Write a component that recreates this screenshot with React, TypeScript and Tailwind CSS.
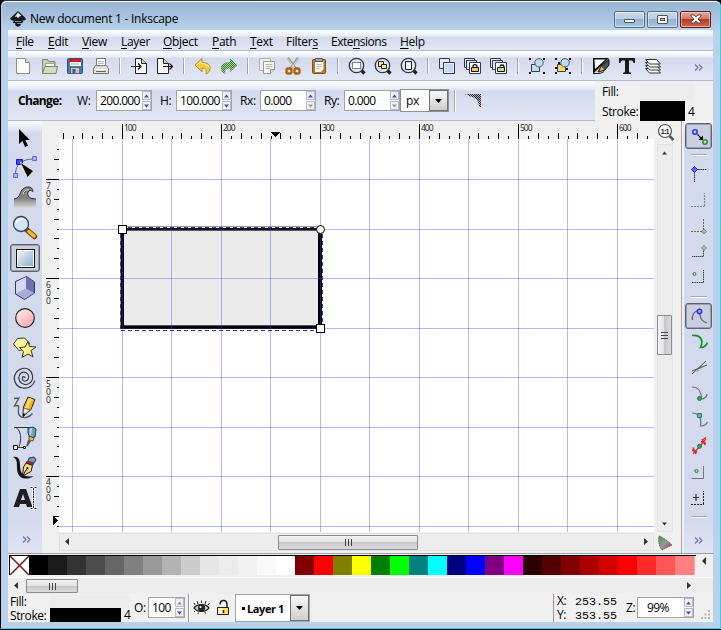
import React from "react";

type Kids = { children?: React.ReactNode };

const BAR = "bg-[linear-gradient(to_bottom,#fff_0px,#e8ecf7_6px,#d4daed_7px,#e2e7f5_100%)]";

/** 24px drawing used in every tool bar */
const Ic = ({ children }: Kids) => (
  <svg width="24" height="24" viewBox="0 0 24 24" className="block shrink-0" fill="none">
    {children}
  </svg>
);
const Slot = ({ children }: Kids) => (
  <div className="flex h-[26px] w-[26px] shrink-0 items-center justify-center">{children}</div>
);
const VSep = () => (
  <div className="flex w-3 shrink-0 justify-center">
    <div className="h-4 w-[2px] border-l border-[#a5a5a8] bg-white" />
  </div>
);
const HSep = () => (
  <div className="flex h-3 shrink-0 items-center justify-center">
    <div className="h-[2px] w-4 border-t border-[#a5a5a8] bg-white" />
  </div>
);
const Chevrons = () => (
  <svg width="9" height="7" viewBox="0 0 9 7" fill="none" stroke="#6e77b5" strokeWidth="1.2">
    <path d="M1 .5 4 3.500 1 6.500M5 .5 8 3.500 5 6.500" />
  </svg>
);

/* ---------- command bar drawings ---------- */
const IcNew = () => (
  <Ic>
    <path d="M5.500 4.500h9l4 4v11h-13z" fill="#fbfbf8" stroke="#8d8e8a" />
    <path d="M14.500 4.500v4h4" fill="#ddd" stroke="#8d8e8a" />
  </Ic>
);
const IcOpen = () => (
  <Ic>
    <path d="M5.500 19V5.500h5l1 2h6.500V19z" fill="#c9cfb2" stroke="#7d876b" />
    <path d="M8.500 9.500h9v4h-9z" fill="#f8f8f5" stroke="#9ba38c" />
    <path d="M5.500 19.500 8 12.500h12.500l-1.500 7z" fill="#d3dabd" stroke="#7d876b" />
  </Ic>
);
const IcSave = () => (
  <Ic>
    <rect x="4.500" y="4.500" width="15" height="15" rx="1" fill="#467ab5" stroke="#25508a" />
    <path d="M7 5h11v7H7z" fill="#fff" />
    <path d="M6 5h12v3H6z" fill="#e0151c" />
    <path d="M8 10h8" stroke="#aaa" />
    <path d="M7.500 13.500h9v6h-9z" fill="#c8c8c4" stroke="#656a70" />
    <path d="M9.500 15h3v4h-3z" fill="#345f91" />
  </Ic>
);
const IcPrint = () => (
  <Ic>
    <path d="M7.500 12V4.500h9V12" fill="#fff" stroke="#777" />
    <path d="M9 7.500h6M9 9.500h6" stroke="#bbb" />
    <path d="M6.500 11.500h11l2 3v5h-15v-5z" fill="#dededb" stroke="#777" />
    <path d="M5 15.500h14" stroke="#fff" />
    <path d="M7 17.500h10" stroke="#666" />
  </Ic>
);
const IcImport = () => (
  <Ic>
    <path d="M8.500 4.500h6l5 5v10h-11z" fill="#f6f6f4" stroke="#222" />
    <path d="M14.500 4.500v5h5" fill="#ccc" stroke="#222" />
    <path d="M4 12.500h9M11 9.500l3 3-3 3" stroke="#111" strokeWidth="1.200" />
  </Ic>
);
const IcExport = () => (
  <Ic>
    <path d="M4.500 4.500h6l5 5v10h-11z" fill="#f6f6f4" stroke="#222" />
    <path d="M10.500 4.500v5h5" fill="#ccc" stroke="#222" />
    <path d="M10 12.500h9M16.500 9.500l3 3-3 3" stroke="#111" strokeWidth="1.200" />
  </Ic>
);
const IcUndo = () => (
  <Ic>
    <path d="M4 11 11 4.500v4c6 0 9 3 8 7-.5 2-2 3.500-4 4.500 1-4-.5-6-4-6v4z" fill="#f0cd3c" stroke="#b8911b" />
    <path d="M6 11 10 7.500v2c4 0 7 1.500 8 4" stroke="#fdf0a0" />
  </Ic>
);
const IcRedo = () => (
  <Ic>
    <defs>
      <pattern id="redo" width="2" height="2" patternUnits="userSpaceOnUse">
        <path d="M0 0h1v1H0zM1 1h1v1H1z" fill="#3d8030" />
        <path d="M1 0h1v1H1zM0 1h1v1H0z" fill="#a9cc98" />
      </pattern>
    </defs>
    <path d="M20.500 11 13 4v4c-6 0-10 3-9 7.500 .5 2 2 3.500 4.500 4.500-1-4 .5-5.500 4.500-5.500V18z" fill="url(#redo)" />
  </Ic>
);
const IcCopy = () => (
  <Ic>
    <path d="M4.500 4.500h11v12h-11z" fill="#efefef" stroke="#b0b0b0" />
    <path d="M8.500 7.500h11v8l-4 4h-7z" fill="#f7f7f7" stroke="#999" />
    <path d="M10.500 10.500h7M10.500 12.500h7M10.500 14.500h5" stroke="#b5b5b5" />
    <path d="M15.500 19.500v-4h4" fill="#ddd" stroke="#999" />
  </Ic>
);
const IcCut = () => (
  <Ic>
    <path d="m7 4 8 11M17 4 9 15" stroke="#8e8e8c" strokeWidth="2.200" />
    <path d="m7 4.500 7 10M17 4.500l-7 10" stroke="#eee" strokeWidth=".8" />
    <rect x="5.500" y="14.500" width="5" height="5" rx="1.500" stroke="#a5640a" strokeWidth="2.300" />
    <rect x="13.500" y="14.500" width="5" height="5" rx="1.500" stroke="#a5640a" strokeWidth="2.300" />
  </Ic>
);
const IcPaste = () => (
  <Ic>
    <rect x="5.500" y="5.500" width="13" height="14" rx="1" fill="#b87a25" stroke="#7d4e10" />
    <path d="M8 7h8.500v8l-2.500 3H8z" fill="#f5f5f3" />
    <path d="M8.500 4.500h7v3h-7z" fill="#aaa" stroke="#555" />
    <path d="M9.500 10.500h5M9.500 12.500h5M9.500 14.500h3" stroke="#b8b8b8" />
  </Ic>
);
const Lens = ({ children }: Kids) => (
  <Ic>
    <path d="m15.500 15.500 4 4" stroke="#222" strokeWidth="3.200" />
    <circle cx="11.500" cy="11.500" r="7.200" fill="#d9e6f3" stroke="#31363b" strokeWidth="1.300" />
    {children}
  </Ic>
);
const IcZoomSel = () => <Lens><path d="M7.500 8.500h8v6h-8z" fill="#fff" stroke="#111" strokeDasharray="1 1" /></Lens>;
const IcZoomDraw = () => (
  <Lens>
    <path d="M7.500 7.500h5v5h-5z" fill="#ffe27c" stroke="#222" />
    <path d="M10.500 10.500h5v4h-5z" fill="#ffe9a3" stroke="#222" />
  </Lens>
);
const IcZoomPage = () => <Lens><path d="M8.500 7.500h6v8h-6z" fill="#f5f5f5" stroke="#222" /></Lens>;
const IcDup = () => (
  <Ic>
    <path d="M4.500 4.500h10v10h-10z" fill="#dfe8f3" stroke="#303b4a" />
    <path d="M8.500 8.500h11v11h-11z" fill="#c6d9ee" stroke="#303b4a" />
    <path d="M9.500 9.500h9v9h-9z" stroke="#e8f1fa" />
  </Ic>
);
const IcClone = ({ cut }: { cut?: boolean }) => (
  <Ic>
    <path d="M3.500 4.500h10v9h-10z" fill="#dfe8f3" stroke="#303b4a" />
    <path d="M5.500 6.500h10v9h-10z" fill="#dfe8f3" stroke="#303b4a" />
    <path d="M8.500 8.500h11v11h-11z" fill="#f3f6fa" stroke="#303b4a" />
    <path d={cut ? "M13 12.500c0-2 4-2 4 0V14" : "M12 14v-1.500c0-2.500 4-2.500 4 0V14"} stroke="#111" strokeWidth="1.300" />
    <path d="M10.500 13.500h7v4h-7z" fill={cut ? "#b9df91" : "#ffc94b"} stroke="#111" />
  </Ic>
);
const IcGroup = ({ un }: { un?: boolean }) => (
  <Ic>
    <path d="M4 4h2v2H4zM18 4h2v2h-2zM4 18h2v2H4zM18 18h2v2h-2z" fill="#111" />
    {un && <path d="M7 8h2v2H7zM15 14h2v2h-2zM4 13h2v2H4z" fill="#111" />}
    <path d="M6.500 10.500h8v7h-8z" fill={un ? "#ffd65c" : "#c8dbf0"} stroke="#333f4c" />
    <circle cx="14" cy="8.800" r="4.200" fill="#c5d9ee" stroke="#48596b" />
  </Ic>
);
const IcFill = () => (
  <Ic>
    <path d="M4 4h16L5 19H4z" fill="#111" />
    <path d="M5.500 5.500h11L6 15z" fill="#f7f7f7" />
    <path d="m20 5.500-7 5.500-4 7 7-2 4-5z" fill="#4b5259" stroke="#111" />
    <path d="m12 12 4 3.500-6 2.500z" fill="#f1b63c" stroke="#111" strokeWidth=".6" />
    <path d="M4 19.500c4 0 8 .5 11-2" stroke="#111" />
  </Ic>
);
const IcText = () => (
  <Ic>
    <path d="M4 4h16v5h-1.500c-.3-2-1-2.500-3-2.500h-1.500v10.500c0 1 .5 1.500 2 1.700V20H8v-1.300c1.500-.2 2-.7 2-1.700V6.500H8.500c-2 0-2.700.5-3 2.500H4z" fill="#1b1b1b" />
  </Ic>
);
const IcLayers = () => (
  <Ic>
    {[14.5, 11.5, 8.5, 5.5].map((y) => (
      <path key={y} d={`M4.500 ${y}h11l4 4.500h-11z`} fill="#fff" stroke="#333" />
    ))}
  </Ic>
);

/* ---------- tool box drawings ---------- */
const TBox = ({ children }: Kids) => (
  <svg width="26" height="26" viewBox="0 0 26 26" className="block" fill="none">
    {children}
  </svg>
);
const tools = [
  <path d="M7 4v15l3.500-3 2.500 6 3-1.200-2.600-5.800H18z" fill="#000" />,
  <>
    <path d="M3.500 19C3.500 10 9 4 22 4" stroke="#666" />
    <path d="M1.500 18.500h4v4h-4zM20.500 1.500h4v4h-4z" fill="#aab0ff" stroke="#6267ea" />
    <path d="M4.500 4.500h6v5h-6z" fill="#4046e6" stroke="#1414c8" />
    <path d="m8 7 13.500 9-6 6.500z" fill="#000" stroke="#fff" strokeWidth=".7" />
  </>,
  <>
    <defs>
      <linearGradient id="wave" x2="0" y2="1"><stop stopColor="#8a8a8a" /><stop offset=".5" stopColor="#808080" /><stop offset="1" stopColor="#e0e0e0" /></linearGradient>
    </defs>
    <path d="M2 24V14c3-.5 5-2 6-5C9.500 4.500 12 2 16 2c3 0 5 1.500 5 4.500-1.500-1.500-4.500-1.500-5 .5-1 3 1 6 4 6.500l4 .5v10z" fill="url(#wave)" />
    <path d="M2 14c3-.5 5-2 6-5C9.500 4.500 12 2 16 2c3 0 5 1.500 5 4.500-1.500-1.500-4.500-1.500-5 .5-1 3 1 6 4 6.500l4 .5M12 8c1-2.500 3-4 5.500-4" stroke="#333" />
    <path d="M11 9c1-3 3-4.500 6-4.500" stroke="#ddd" />
  </>,
  <>
    <path d="m15 15 7.500 6.500" stroke="#6d4a10" strokeWidth="5.500" strokeLinecap="round" />
    <path d="m17 16.500 5 4.500" stroke="#f7b52d" strokeWidth="3.500" strokeLinecap="round" />
    <circle cx="9" cy="9" r="7.500" fill="#d5e7f6" stroke="#354554" strokeWidth="1.300" />
    <path d="M4 8c1-3 4-5 7-4" stroke="#fff" strokeWidth="1.500" />
  </>,
  <>
    <defs>
      <linearGradient id="sq" x2="1" y2="1"><stop stopColor="#edf5fb" /><stop offset="1" stopColor="#8eafcd" /></linearGradient>
    </defs>
    <rect x="4.500" y="4.500" width="18" height="18" fill="#fff" stroke="#111" />
    <path d="M6 6h15v15H6z" fill="url(#sq)" />
  </>,
  <>
    <path d="m3.500 6.500 11-5 8 5.500v11l-10 6.500-9-5.500z" fill="#8186bb" stroke="#33365c" />
    <path d="m4 7 10-5v12l-10 5z" fill="#d5d7ee" />
    <path d="m14 2 8 5v11l-8-4.500z" fill="#6c71b0" />
    <path d="m4 18.500 10-5 8 4.500-9.500 6z" fill="#a9acd5" />
  </>,
  <>
    <defs>
      <linearGradient id="ball" x2="1" y2="1"><stop stopColor="#fff1f2" /><stop offset="1" stopColor="#ff9ea6" /></linearGradient>
    </defs>
    <circle cx="13" cy="13" r="9.300" fill="url(#ball)" stroke="#222" strokeWidth="1.200" />
  </>,
  <>
    <path d="m1.500 9 4-5.500 7-.5 5 5-2.500 6-8 1.500z" fill="#fff5a6" stroke="#3b3720" />
    <path d="m16 6.500 1.500 5 6.500.5-5 3.500 2 6.500-5-3-6 3.500 1.500-6-4-4 5.500-.5z" fill="#fff08a" stroke="#3b3720" />
  </>,
  <path d="M13 13c0-1.500-2-2-2.500-.5-1 2.500 1 4 3 3.500 3-.7 4-4 2.500-6.500C14 6 9 6.500 7.500 10c-2 4 .5 9 5.500 9.500 5.500.5 8.500-4.500 7.500-9C19.500 5 15 2.500 10.500 3.500 4.500 5 1 10.500 2.700 16c1 3.500 4 6.500 8 7 6 1 11-2.500 12-7.500" stroke="#353b47" strokeWidth="1.200" />,
  <>
    <path d="M2 3.500 7 3 2.500 11l3-.5c3 0-1 6.500 2 10 3 4 10 2 13-2" stroke="#55575c" strokeWidth="1.300" />
    <path d="m16 2 7 2.500-4 10-8 7 .5-9.500z" fill="#f3ac25" stroke="#2d2415" />
    <path d="m17 3 3 1-4 9-3 1z" fill="#ffdf62" />
    <path d="m11.500 13 6.500 2-7 6.500z" fill="#f2e4c8" stroke="#222" strokeWidth=".6" />
    <path d="m11 18 2.500 1-2.500 3z" fill="#111" />
  </>,
  <>
    <path d="M2 2.500h15M4 2.500c5 3 6 12 3 19M5 22.500h8" stroke="#333" />
    <path d="M1.500 20.500h4v4h-4zM11.500 21.500h2v2h-2z" fill="#fff" stroke="#111" />
    <path d="m16 3 5-1 3 2-1 8-5 1-2-5z" fill="#6d9fbf" stroke="#26343d" />
    <path d="m18 3.500 2-.5-1 8-1.500-1z" fill="#b8dced" />
    <path d="m17 11 5 2-1 3-4-1z" fill="#f2bd3b" stroke="#222" strokeWidth=".7" />
    <path d="m16 15 3 1-3 5-2 1z" fill="#555" />
  </>,
  <>
    <path d="M1 2c5-1 7 2 7 8 0 7 2 13 14 11-8 5-17 3-17-8C5 7 5 4 1 2z" fill="#151515" />
    <path d="m17 3 5-1 2 3-3 4-5-2z" fill="#6d9fbf" stroke="#26343d" />
    <path d="m15 6 7 2-1 2-7-2z" fill="#c61e24" stroke="#330b0d" strokeWidth=".5" />
    <path d="m14 8 6.500 2.500-1.500 6-8.500 4.500 1-9z" fill="#f8d67a" stroke="#1e1a12" />
    <path d="m11 20 4.500-7" stroke="#111" />
    <circle cx="15.500" cy="13" r="1" fill="#111" />
  </>,
  <>
    <path d="M1.500 22 8 4h6l6.500 18h-5.500l-1-3H8l-1 3zM9 15h4l-2-6z" fill="#1e1e1e" fillRule="evenodd" />
    <path d="M21.500 3.500v19M18.500 2.500h2l1 1 1-1h2M18.500 23.500h2l1-1 1 1h2" stroke="#fff" strokeWidth="2.500" />
    <path d="M21.500 3.500v19M18.500 2.500h2l1 1 1-1h2M18.500 23.500h2l1-1 1 1h2" stroke="#222" strokeDasharray="2 .5" />
  </>,
];

/* ---------- snap bar drawings ---------- */
const diamond = (x: number, y: number, f = "#9fc79f", s = "#3f6f46") => (
  <path d={`M${x} ${y - 2.5}l2.500 2.500-2.500 2.500-2.500-2.500z`} fill={f} stroke={s} strokeDasharray="1 .4" />
);
const SnapMain = () => (
  <Ic>
    <circle cx="8" cy="8" r="2.200" fill="#c5c9ff" stroke="#2f35ea" strokeWidth="1.600" />
    <circle cx="18" cy="18" r="2.200" fill="#bfe5c5" stroke="#2f8a3c" strokeWidth="1.600" />
    <path d="m10.500 10.500 4 4" stroke="#000" strokeWidth="1.300" strokeDasharray="2 .5" />
    <path d="M16 11.500V16h-4.500z" fill="#000" />
  </Ic>
);
const snapsA = [
  <>
    <path d="M7.500 8v12M9 7.500h11" stroke="#222" strokeDasharray="1.500 .7" />
    <path d="M7.500 4.500l3 3-3 3-3-3z" fill="#5d63f3" stroke="#2228dc" />
  </>,
  <path d="M4 18.500h13.500M17.500 18V5" stroke="#6f8f74" strokeWidth="1.200" strokeDasharray="2 1" />,
  <>
    <path d="M4 17.500h12M16.500 16V4" stroke="#666" strokeDasharray="2 1" />
    {diamond(17, 17.5)}
  </>,
  <>
    <path d="M5 16.500h11.500v-9" stroke="#444" strokeDasharray="1.500 .5" />
    {diamond(17, 8)}
  </>,
  <>
    <path d="M5 16.500h11.500V4" stroke="#333" strokeDasharray="1.500 .8" />
    <circle cx="7.500" cy="8" r="1.500" fill="#b5d5b8" stroke="#55805a" />
  </>,
];
const SnapPath = () => (
  <Ic>
    <path d="M5.500 16c-1-4 2-10 6-8.500 3 1-1 9 8.500 11.500" stroke="#555c66" strokeWidth="1.200" />
    <circle cx="12.500" cy="7.500" r="2.200" fill="#a9aeff" stroke="#2f35ea" strokeWidth="1.500" />
  </Ic>
);
const snapsB = [
  <path d="M5 5.500c8-1 12 4 8.500 12 3 0 6-2 7-5" stroke="#16902a" strokeWidth="1.700" />,
  <>
    <path d="M5 18 19 5M5 15l15-6" stroke="#555" />
    <path d="m8 14.500 7-5M10 15.500l6-6" stroke="#47764b" strokeDasharray="2 1" />
  </>,
  <>
    <path d="M5 5c6 0 9 3 9.500 12M14 17c4 0 6-3 6-5" stroke="#666e79" strokeWidth="1.200" />
    <circle cx="12.500" cy="16.500" r="2" fill="#4fa75b" stroke="#257b35" />
  </>,
  <>
    <path d="M5 5c6 0 10 4 8.500 13 3 0 6-2 7-4" stroke="#666e79" strokeWidth="1.200" />
    <path d="M10.500 5.500h4v4h-4z" fill="#7ea9a2" stroke="#257b5a" />
  </>,
  <>
    <path d="m6 20 13-15" stroke="#c13b3b" strokeWidth="1.200" />
    <path d="m5 16 5 2M6 13.500l3 6.500M14 7.500l5 2M15 5l3 6M16 5.500l3-2" stroke="#dc2525" strokeWidth="1.500" />
    <circle cx="12.500" cy="12.300" r="2" fill="#46a354" stroke="#207833" />
  </>,
  <>
    <path d="M4.500 18.500h12V6" stroke="#777" />
    <circle cx="9.500" cy="11" r="1.600" fill="#9bd9a1" stroke="#1a8a2a" />
  </>,
  <>
    <path d="M4 18.500h13M16.500 18V5" stroke="#222" strokeDasharray="2 1" />
    <path d="M6 11.500h6M9 8v7" stroke="#333" strokeWidth="1.200" />
  </>,
];

const Tri = ({ d, c = "#4c5cab" }: { d: string; c?: string }) => (
  <svg width="7" height="4" viewBox="0 0 7 4"><path d={d} fill={c} /></svg>
);
const UP = "M0 4 3.500 0 7 4z";
const SUP = "M1 3.500 3.500 .5 6 3.500z";
const SDOWN = "M1 .5h5L3.500 3.500z";
const DOWN = "M0 0h7L3.500 4z";
const Spin = ({ v, dim, dimUp, className = "w-[56px]" }: { v: string; dim?: boolean; dimUp?: boolean; className?: string }) => (
  <div className={`flex h-[21px] shrink-0 border border-[#a2a4aa] bg-white ${className}`}>
    <div className="min-w-0 grow pl-[3px] text-[12px] leading-[20px] tracking-[-0.65px] whitespace-nowrap">{v}</div>
    <div className="flex w-[9px] shrink-0 flex-col gap-px bg-white">
      <div className="flex h-[9px] items-center justify-center border border-[#b9bcc6] bg-[#eeeff6]"><Tri d={SUP} c={dimUp ? "#999" : "#3f51ab"} /></div>
      <div className="flex h-[9px] items-center justify-center border border-[#b9bcc6] bg-[#eeeff6]"><Tri d={SDOWN} c={dim ? "#999" : "#3f51ab"} /></div>
    </div>
  </div>
);
const ComboArrow = ({ className }: { className: string }) => (
  <div className={`flex items-center justify-center border border-[#6f6f6f] bg-gradient-to-b from-[#f8f8f8] to-[#cfcfcf] ${className}`}>
    <Tri d={DOWN} c="#000" />
  </div>
);
const Arrow = ({ d }: { d: string }) => (
  <svg width="8" height="8" viewBox="0 0 8 8" className="block shrink-0"><path d={d} fill="#333" /></svg>
);

const menus: [string, string, string, string][] = [
  ["", "F", "ile", "w-[32px]"], ["", "E", "dit", "w-[34px]"], ["", "V", "iew", "w-[39px]"], ["", "L", "ayer", "w-[42px]"],
  ["", "O", "bject", "w-[49px]"], ["", "P", "ath", "w-[38px]"], ["", "T", "ext", "w-[36px]"], ["Filter", "s", "", "w-[45px]"],
  ["Exte", "n", "sions", "w-[69px]"], ["", "H", "elp", "w-[30px]"],
];

const swatches = [
  "#000000", "#1a1a1a", "#333333", "#4d4d4d", "#666666", "#808080", "#999999", "#b3b3b3", "#cccccc", "#e6e6e6", "#ececec",
  "#f2f2f2", "#f9f9f9", "#ffffff", "#800000", "#ff0000", "#808000", "#ffff00", "#008000", "#00ff00", "#008080", "#00ffff",
  "#000080", "#0000ff", "#800080", "#ff00ff", "#2b0000", "#550000", "#800000", "#aa0000", "#d40000", "#ff0000", "#ff2a2a",
  "#ff5555", "#ff8080",
];

const HRuler = () => (
  <svg width="612" height="18" viewBox="42 121 612 18" className="block shrink-0" shapeRendering="crispEdges">
    {Array.from({ length: 60 }, (_, n) => {
      const k = n - 6;
      const h = k % 10 === 0 ? 15 : k % 2 === 0 ? 6 : 3;
      return <rect key={n} x={Math.round(122 + k * 9.9)} y={139 - h} width="1" height={h} fill="#000" />;
    })}
    {[100, 200, 300, 400, 500, 600].map((v, i) => (
      <text key={v} x={Math.round(124 + i * 99)} y="130.500" fontSize="8.500" textLength="12.500" fontFamily="'Open Sans',sans-serif" fill="#222">{v}</text>
    ))}
    <path d="M271 132h9l-4.500 5z" fill="#000" />
  </svg>
);
const VRuler = () => (
  <svg width="17" height="414" viewBox="42 139 17 414" className="block shrink-0" shapeRendering="crispEdges">
    {Array.from({ length: 39 }, (_, n) => {
      const k = n - 3;
      const w = k % 10 === 0 ? 13 : k % 2 === 0 ? 5 : 2;
      return <rect key={n} x={59 - w} y={Math.round(179 + k * 9.9)} width={w} height="1" fill="#000" />;
    })}
    {["700", "600", "500", "400"].map((s, i) => (
      <text
        key={s}
        x="46 46 46"
        y={[189, 197, 205].map((y) => y + i * 99 - (i === 3 ? 1 : 0)).join(" ")}
        fontSize="8.500"
        fontFamily="'Open Sans',sans-serif"
        fill="#222"
      >
        {s}
      </text>
    ))}
    <path d="M53 516v9l5-4.500z" fill="#000" />
  </svg>
);
const Canvas = () => (
  <svg width="595" height="393" viewBox="59 139 595 393" className="block shrink-0 bg-white" shapeRendering="crispEdges">
    <rect x="122" y="229" width="198" height="98" fill="#ebebeb" />
    <path d="M122 228h199v3H122z" fill="#000" />
    <path d="M121 228h3v100h-3zM318 228h4v100h-4z" fill="#000010" />
    <path d="M121 326h201v3H121z" fill="#000" />
    <path d="M124 325h194v1H124zM124 230h194v1H124z" fill="#555" />
    <path d="M121 226.500h201M120.500 227v102" stroke="#999" fill="none" />
    <path d="M121 227.500h201M120.500 227v102M322.500 227v102M121 330.500h201" stroke="#444" strokeDasharray="4 3" fill="none" />
    {[72, 122, 171, 221, 270, 320, 369, 419, 468, 518, 567, 617].map((x) => (
      <rect key={x} x={x} y="139" width="1" height="393" fill="#3b3bff" opacity=".36" />
    ))}
    {[179, 229, 278, 328, 377, 427, 476, 526].map((y) => (
      <rect key={y} x="59" y={y} width="595" height="1" fill="#3b3bff" opacity=".36" />
    ))}
    <path d="M118.500 225.500h8v8h-8zM316.500 324.500h8v8h-8z" fill="#fff" stroke="#000" />
    <circle cx="320.500" cy="229.500" r="4" fill="#fff" stroke="#000" shapeRendering="auto" />
  </svg>
);

const WinBtn = ({ children, className }: Kids & { className: string }) => (
  <div className={`flex h-[17px] w-[31px] items-center justify-center rounded-[2px] border shadow-[inset_0_0_0_1px_rgba(255,255,255,.45)] ${className}`}>{children}</div>
);
const GLASS = "border-[#576d86] bg-[linear-gradient(#c9d9ea_0%,#b7cbe0_48%,#96b2cf_50%,#a9c5df_100%)]";
const PRESSED = "flex items-center justify-center rounded-[3px] border border-[#5f636e] shadow-[inset_0_0_0_1px_#9a9eae] bg-[#c9cee1]";

export default function App() {
  return (
    <div className="h-[630px] w-[721px] overflow-hidden bg-black font-['Open_Sans','Noto_Sans',sans-serif] text-[12px] text-black">
      <div className="box-content flex h-[627px] w-[705px] flex-col rounded-t-[6px] border border-t-[#33343d] border-r-[#35d0ee] border-b-[#35d0ee] border-l-black bg-[#b9d1ea] pr-[7px] pl-[7px]">
        {/* title bar */}
        <div className="-mr-[7px] -ml-[6px] flex h-[29px] shrink-0 items-center rounded-t-[5px] border-t border-white bg-gradient-to-b from-[#98b4d3] to-[#b9d1ea] pr-[9px] pl-[8px]">
          <svg width="16" height="16" viewBox="0 0 16 16" className="mt-[6px] shrink-0">
            <path d="M8 0 15.500 7c1 2-1 2.500-3 2.500l1 1.500-3 1.500.5 1.500L8 16l-3-2 .5-1.500-3-1L4 10C2 9.500-.5 9 .5 7z" fill="#15191e" />
            <path d="m8 1.500 3.500 3.500-2 .5L8 7 6.500 5.500l-2 .5z" fill="#e6edf4" />
            <path d="M5 10.500h6M7 12.500h4" stroke="#7c8b98" />
          </svg>
          <span className="mt-[6px] ml-[4px] text-[12px] leading-[16px] tracking-[-0.26px] whitespace-nowrap">New document 1 - Inkscape</span>
          <div className="mt-[6px] ml-auto flex gap-[2px]">
            <WinBtn className={GLASS}><div className="mt-1 h-[4px] w-[11px] rounded-[1px] border border-[#50565f] bg-white" /></WinBtn>
            <WinBtn className={GLASS}><div className="flex h-[9px] w-[11px] items-center justify-center rounded-[1px] border border-[#50565f] bg-white"><div className="h-[3px] w-[5px] border border-[#50565f] bg-[#a8bfd7]" /></div></WinBtn>
            <WinBtn className="border-[#551d20] bg-[linear-gradient(#e3a395_0%,#d07866_48%,#b83820_50%,#d4684d_100%)]">
              <svg width="12" height="10" viewBox="0 0 12 10"><path d="M1 1h3l2 2 2-2h3v1L8 5l3 3v1H8L6 7 4 9H1V8l3-3-3-3z" fill="#fff" stroke="#5b3b42" strokeWidth=".9" /></svg>
            </WinBtn>
          </div>
        </div>
        {/* menu */}
        <div className={`flex h-[21px] shrink-0 border-b border-[#b4bacf] pl-[8px] ${BAR}`}>
          {menus.map(([a, u, b, w]) => (
            <div key={a + u + b} className={`shrink-0 text-[12px] leading-[23px] whitespace-nowrap ${w} ${a === "Exte" ? "tracking-[-0.5px]" : "tracking-[-0.3px]"}`}>
              {a}<span className="underline underline-offset-2">{u}</span>{b}
            </div>
          ))}
        </div>
        {/* command bar */}
        <div className={`flex h-[30px] shrink-0 items-center border-b border-[#b4bacf] pl-[2px] ${BAR}`}>
          <Slot><IcNew /></Slot><Slot><IcOpen /></Slot><Slot><IcSave /></Slot><Slot><IcPrint /></Slot>
          <VSep />
          <Slot><IcImport /></Slot><Slot><IcExport /></Slot>
          <VSep />
          <Slot><IcUndo /></Slot><Slot><IcRedo /></Slot>
          <VSep />
          <Slot><IcCopy /></Slot><Slot><IcCut /></Slot><Slot><IcPaste /></Slot>
          <VSep />
          <Slot><IcZoomSel /></Slot><Slot><IcZoomDraw /></Slot><Slot><IcZoomPage /></Slot>
          <VSep />
          <Slot><IcDup /></Slot><Slot><IcClone /></Slot><Slot><IcClone cut /></Slot>
          <VSep />
          <Slot><IcGroup /></Slot><Slot><IcGroup un /></Slot>
          <VSep />
          <Slot><IcFill /></Slot><Slot><IcText /></Slot><Slot><IcLayers /></Slot>
          <div className="mt-[3px] mr-[10px] ml-auto"><Chevrons /></div>
        </div>
        {/* tool controls */}
        <div className="flex h-[40px] shrink-0">
          <div className="flex w-[587px] shrink-0 items-center border-b border-[#b4bacf] bg-[linear-gradient(to_bottom,#fff_0px,#e6eaf6_8px,#d4daed_10px,#e2e7f5_100%)] pl-[10px] tracking-[-0.4px]">
            <span className="w-[59px] font-bold tracking-[-0.65px]">Change:</span>
            <span className="w-[19px]">W:</span><Spin v="200.000" />
            <span className="ml-[8px] w-[16px]">H:</span><Spin v="100.000" />
            <span className="ml-[8px] w-[20px]">Rx:</span><Spin v="0.000" dim />
            <span className="ml-[8px] w-[20px]">Ry:</span><Spin v="0.000" dim />
            <div className="flex h-[23px] w-[49px] shrink-0 border border-[#8f9196] bg-white">
              <span className="grow pl-[5px] leading-[21px]">px</span>
              <ComboArrow className="w-[19px]" />
            </div>
            <div className="ml-[5px] h-[22px] w-[2px] border-l border-[#a5a5a8] bg-white" />
            <svg width="18" height="14" viewBox="0 0 18 14" className="mb-[2px] ml-[9px]">
              <defs>
                <pattern id="dither" width="2" height="2" patternUnits="userSpaceOnUse"><path d="M0 0h1v1H0zM1 1h1v1H1z" fill="#222" /></pattern>
              </defs>
              <path d="M2 1h14v13h-2C14 7 10 4 4 3z" fill="#777" opacity=".4" />
              <path d="M2 1h14v13h-2C14 7 10 4 4 3z" fill="url(#dither)" />
              <path d="M0 1.500h4M15.500 10v4" stroke="#d66" strokeDasharray="1 1" />
            </svg>
          </div>
          <div className="flex grow flex-col bg-[#f0f0f0] pl-[7px] tracking-[-0.4px]">
            <div className="flex h-[20px] items-center"><span className="mt-px w-[38px]">Fill:</span><div className="h-[18px] w-[54px] bg-[#ededed]" /></div>
            <div className="flex h-[20px] items-center"><span className="mt-px w-[38px]">Stroke:</span><div className="h-[20px] w-[45px] bg-black" /><span className="mt-px ml-[3px]">4</span></div>
          </div>
        </div>
        {/* work area */}
        <div className="flex h-[432px] shrink-0 bg-[#f0f0f0]">
          <div className="flex w-[34px] shrink-0 flex-col items-center bg-[linear-gradient(to_bottom,#f8f9fd_0px,#e4e8f5_8px,#d4daee_12px,#d4daee_400px,#e0e4f4_100%)] pt-[2px]">
            {tools.map((t, i) => (
              <div key={i} className="flex h-[30px] w-[34px] items-center justify-center">
                {i === 4 ? <div className={`h-[28px] w-[30px] ${PRESSED}`}><TBox>{t}</TBox></div> : <TBox>{t}</TBox>}
              </div>
            ))}
            <div className="mt-[23px] ml-[2px]"><Chevrons /></div>
          </div>
          <div className="flex w-[612px] shrink-0 flex-col">
            <HRuler />
            <div className="flex">
              <VRuler />
              <div className="flex flex-col">
                <Canvas />
                <div className="mt-px flex h-[18px] items-center border border-[#e2e2e2] bg-[#ededed] pl-[3px]">
                  <Arrow d="M6 0v7L2 3.500z" />
                  <div className="ml-[207px] flex h-[15px] w-[140px] shrink-0 items-center justify-center gap-[2px] rounded-[1px] border border-[#8c8c90] bg-[linear-gradient(#f4f4f5,#e2e2e4_48%,#c8c8cc_50%,#dadadd)]">
                    {[0, 1, 2].map((n) => <div key={n} className="h-[7px] w-px bg-[#444]" />)}
                  </div>
                  <div className="mr-[3px] ml-auto"><Arrow d="M2 0v7l4-3.500z" /></div>
                </div>
              </div>
            </div>
          </div>
          <div className="flex w-[27px] shrink-0 flex-col items-center">
            <svg width="20" height="20" viewBox="0 0 20 20" className="mt-px mr-[4px] shrink-0" fill="none">
              <path d="m13.500 14 4 4" stroke="#555" strokeWidth="2.500" />
              <circle cx="9" cy="9" r="6.500" fill="#f5f5f5" stroke="#555" strokeWidth="1.200" />
              <text x="4.800" y="11.500" fontSize="7" fontWeight="bold" textLength="8.500" fontFamily="'Liberation Sans',sans-serif" fill="#222">1:1</text>
            </svg>
            <div className="mt-[2px] mr-[6px] flex h-[388px] w-[16px] shrink-0 flex-col items-center border border-[#e3e3e3] bg-[#ededed] pt-[6px]">
              <Tri d={SUP} c="#333" />
              <div className="mt-[160px] flex h-[40px] w-[15px] shrink-0 flex-col items-center justify-center gap-[2px] rounded-[1px] border border-[#8c8c90] bg-[linear-gradient(to_right,#f4f4f5,#e2e2e4_48%,#c8c8cc_50%,#dadadd)]">
                {[0, 1, 2].map((n) => <div key={n} className="h-px w-[7px] bg-[#444]" />)}
              </div>
              <div className="mt-auto mb-[5px] flex"><Tri d={SDOWN} c="#333" /></div>
            </div>
            <svg width="16" height="16" viewBox="0 0 16 16" className="mt-[3px] mr-[5px] shrink-0">
              <defs>
                <linearGradient id="gam" x2="1" y2="1"><stop stopColor="#3a9a4a" /><stop offset=".5" stopColor="#999" /><stop offset="1" stopColor="#a0205a" /></linearGradient>
              </defs>
              <path d="M2 1c4 1 10 6 13 9L5 15C2 12 1 5 2 1z" fill="url(#gam)" stroke="#555" strokeDasharray="1 1" />
            </svg>
          </div>
          <div className="flex grow flex-col border-l border-[#a8a8ac] pl-[2px]">
            <div className="flex grow flex-col items-center bg-[linear-gradient(to_bottom,#f8f9fd_0px,#d4daee_12px,#d4daee_400px,#e0e4f4_100%)] pt-[2px]">
              <div className={`h-[26px] w-[27px] shrink-0 ${PRESSED}`}><SnapMain /></div>
              <HSep />
              {snapsA.map((s, i) => <Slot key={i}><Ic>{s}</Ic></Slot>)}
              <HSep />
              <div className={`h-[26px] w-[27px] shrink-0 ${PRESSED}`}><SnapPath /></div>
              {snapsB.map((s, i) => <Slot key={i}><Ic>{s}</Ic></Slot>)}
              <HSep />
              <div className="mt-[14px]"><Chevrons /></div>
            </div>
          </div>
        </div>
        {/* palette */}
        <div className="flex h-[24px] shrink-0 border-t border-[#a0a0a0] bg-[#f0f0f0]">
          <div className="mt-px ml-px flex h-[20px] w-[687px] border-t border-l border-black">
            <svg width="19" height="19" viewBox="0 0 19 19" className="block shrink-0 bg-white"><path d="m0 0 19 19M19 0 0 19" stroke="#7c1517" strokeWidth="1.500" /></svg>
            {swatches.map((c, i) => <div key={i} className="h-[19px] w-[19px] shrink-0" style={{ backgroundColor: c }} />)}
            <div className="h-[19px] w-px bg-[#ffaaaa]" />
          </div>
          <div className="mt-[3px] ml-[4px]"><Arrow d="M6 0v8L2 4z" /></div>
        </div>
        <div className="flex h-[17px] shrink-0 items-center border-t border-white bg-[#ededed] pl-[4px]">
          <Arrow d="M6 0v7L2 3.500z" />
          <div className="ml-[6px] flex h-[14px] w-[52px] items-center justify-center gap-[2px] rounded-[1px] border border-[#8c8c90] bg-[linear-gradient(#f4f4f5,#e2e2e4_48%,#c8c8cc_50%,#dadadd)]">
            {[0, 1, 2].map((n) => <div key={n} className="h-[7px] w-px bg-[#444]" />)}
          </div>
          <div className="mr-[20px] ml-auto"><Arrow d="M2 0v7l4-3.500z" /></div>
        </div>
        {/* status bar */}
        <div className="flex h-[28px] shrink-0 items-start bg-[#f0f0f0] pl-[2px] tracking-[-0.4px]">
          <div className="flex w-[124px] shrink-0 flex-col">
            <div className="flex h-[14px] items-center"><span className="mt-px w-[40px] leading-[14px]">Fill:</span><div className="h-[13px] w-[80px] bg-[#ededed]" /></div>
            <div className="flex h-[14px] items-center"><span className="mt-px w-[40px] leading-[14px]">Stroke:</span><div className="h-[14px] w-[71px] bg-black" /><span className="ml-[3px]">4</span></div>
          </div>
          <span className="mt-[5px] w-[14px]">O:</span>
          <div className="mt-[3px]"><Spin v="100" dimUp className="w-[37px]" /></div>
          <div className="ml-[3px] h-[28px] w-[2px] border-l border-[#999] bg-white" />
          <svg width="17" height="16" viewBox="0 0 17 16" className="mt-[6px] ml-[3px]" fill="none">
            <path d="M1 8c3-4.500 12-4.500 15 0-3 4.500-12 4.500-15 0z" fill="#ccc" stroke="#111" strokeWidth="1.300" />
            <circle cx="8.500" cy="8" r="3.500" fill="#222" /><circle cx="7.500" cy="7" r="1" fill="#fff" />
            <path d="m2 5-1-2M5 4 4 1M8.500 3V.5M12 4l1-3M15 5l1.500-2M2 11l-1 1M5.500 12.500 5 14M12 12l.5 1.500" stroke="#222" />
          </svg>
          <svg width="15" height="17" viewBox="0 0 15 17" className="mt-[5px] ml-[6px]" fill="none">
            <path d="M4 5.500c0-5.500 7-5.500 7 0V9" stroke="#222" strokeWidth="1.500" />
            <path d="M1.500 8.500h11v7h-11z" fill="#f5e06b" stroke="#222" />
            <path d="M2.500 9.500h4v5h-4z" fill="#fffbe0" /><path d="M7.500 11v3" stroke="#222" strokeWidth="1.500" />
          </svg>
          <div className="ml-[4px] flex h-[28px] w-[75px] shrink-0 border border-[#a2a4aa] bg-white">
            <span className="flex grow items-center gap-[2px] pl-[6px] text-[11px] leading-[25px] font-bold tracking-[-0.4px] whitespace-nowrap"><i className="h-[3px] w-[3px] bg-black" />Layer 1</span>
            <ComboArrow className="w-[19px] shrink-0" />
          </div>
          <div className="ml-auto flex h-[28px] w-[160px] border-l border-[#999]">
            <div className="w-[21px] pl-[3px] leading-[14px]">X:<br />Y:</div>
            <div className="w-[51px] pt-px font-['Liberation_Mono',monospace] text-[11.7px] leading-[14px] tracking-normal">253.55<br />353.55</div>
            <span className="mt-[5px] w-[11px]">Z:</span>
            <div className="mt-[3px]"><Spin v="99%" className="w-[57px] [&>div:first-child]:pl-[9px]" /></div>
            <svg width="9" height="9" viewBox="0 0 9 9" className="mt-[16px] ml-[7px]"><path d="M7 0h2v2H7zM3.500 3.500h2v2h-2zM7 3.500h2v2H7zM0 7h2v2H0zM3.500 7h2v2h-2zM7 7h2v2H7z" fill="#b9b9b9" /></svg>
          </div>
        </div>
      </div>
    </div>
  );
}
